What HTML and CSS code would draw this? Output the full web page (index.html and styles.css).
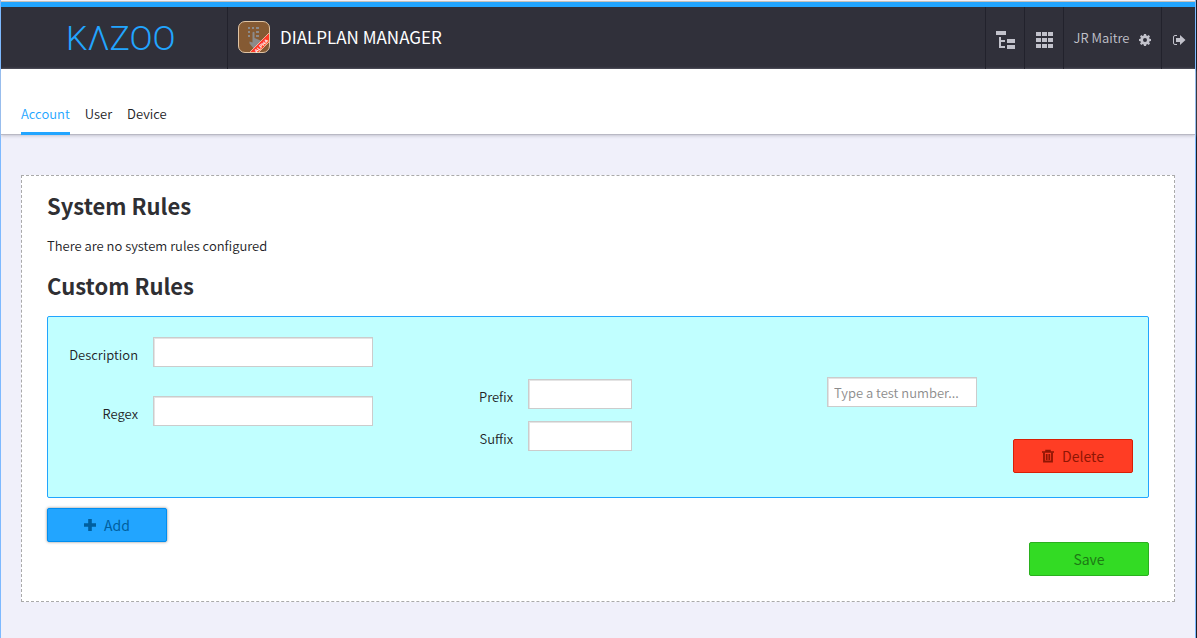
FILE: index.html
```html
<!DOCTYPE html>
<html lang="en">
<head>
<meta charset="utf-8">
<title>Dialplan Manager</title>
<link rel="stylesheet" href="styles.css">
</head>
<body>
<div class="app">
  <header class="topbar">
    <div class="brand" role="img" aria-label="Kazoo">KΛZOO</div>
    <div class="current-app">
      <svg class="app-icon" viewBox="0 0 32 32" aria-hidden="true">
        <defs><clipPath id="tile"><rect x="1" y="1" width="30" height="30" rx="6"/></clipPath></defs>
        <rect x="0.5" y="0.5" width="31" height="31" rx="6.5" fill="#855a33" stroke="#e0c4a4"/>
        <g fill="#8c8a8a">
          <path d="M10 6h2v2h-2zM14 6h2v2h-2zM18 6h3v2h-3zM10 10h2v2h-2zM18 10h3v2h-3zM10 14h2v2h-2zM18 14h3v2h-3z"/>
          <path d="M14.500 11.500q1-1.500 2 0V17l6 2.500 1 4-3 5h-4l-5-6v-2l3 1z"/>
        </g>
        <g clip-path="url(#tile)">
          <path d="M10 33L33 10V19L19 33z" fill="#ff3b26"/>
          <path d="M11 32L32 11M19 33L33 19" stroke="#f3c9b8" stroke-width="0.8"/>
        </g>
        <text class="ribbon" x="23" y="26" transform="rotate(-45 24 24)" text-anchor="middle">ALPHA</text>
      </svg>
      <span class="app-title">DIALPLAN MANAGER</span>
    </div>
    <button class="tool" type="button" aria-label="Account tree">
      <svg width="20" height="20" viewBox="0 0 20 20" fill="currentColor" aria-hidden="true">
        <path d="M1 1h10v4H1zM12 9h8v4h-8zM12 15h8v4h-8zM4 7h2v3h4v2H6v4h4v2H4z"/>
      </svg>
    </button>
    <button class="tool" type="button" aria-label="Applications">
      <svg width="18" height="18" viewBox="0 0 18 18" fill="currentColor" aria-hidden="true">
        <path d="M1 1h5v4H1zM7 1h5v4H7zM13 1h5v4h-5zM1 7h5v4H1zM7 7h5v4H7zM13 7h5v4h-5zM1 13h5v4H1zM7 13h5v4H7zM13 13h5v4h-5z"/>
      </svg>
    </button>
    <button class="tool user" type="button"><span class="user-name">JR Maitre</span>
      <svg width="12" height="12" viewBox="0 0 12 12" fill="currentColor" aria-hidden="true">
        <path fill-rule="evenodd" d="M5 0h2l.4 1.600.9.400L9.700 1.100l1.300 1.300-.9 1.400.4.900L12 5v2l-1.500.3-.4.900.9 1.400-1.300 1.300-1.400-.9-.9.400L7 12H5l-.4-1.600-.9-.4-1.400.9L1 9.600l.9-1.400-.4-.9L0 7V5l1.500-.3.4-.9L1 2.400l1.300-1.300 1.400.9.9-.4zM6 4a2 2 0 1 0 0 4 2 2 0 0 0 0-4z"/>
      </svg>
    </button>
    <button class="tool logout" type="button" aria-label="Log out">
      <svg width="14" height="12" viewBox="0 0 14 12" aria-hidden="true">
        <path d="M5 1.500H3Q1.500 1.500 1.500 3v6q0 1.500 1.500 1.500h2" fill="none" stroke="currentColor"/>
        <path d="M4 4h4V1l5.500 5L8 11V8H4z" fill="currentColor"/>
      </svg>
    </button>
  </header>

  <nav class="tabs">
    <a class="tab active" href="#account">Account</a>
    <a class="tab" href="#user">User</a>
    <a class="tab" href="#device">Device</a>
  </nav>

  <main class="panel">
    <h2>System Rules</h2>
    <p>There are no system rules configured</p>
    <h2>Custom Rules</h2>
    <form>
      <section class="rule">
        <div class="match">
          <div class="field"><label for="description">Description</label><input id="description" type="text"></div>
          <div class="field"><label for="regex">Regex</label><input id="regex" type="text"></div>
        </div>
        <div class="affix">
          <div class="field"><label for="prefix">Prefix</label><input id="prefix" type="text"></div>
          <div class="field"><label for="suffix">Suffix</label><input id="suffix" type="text"></div>
        </div>
        <div class="trial">
          <input class="test" type="text" aria-label="Test number" placeholder="Type a test number...">
          <button class="btn delete" type="button">
            <svg width="12" height="14" viewBox="0 0 12 14" aria-hidden="true">
              <path d="M0 3h12M4 3V1.500h4V3" fill="none" stroke="currentColor" stroke-width="1.500"/>
              <path d="M2 3.500V12.500h8V3.500M4.700 5v6M7.300 5v6" fill="none" stroke="currentColor" stroke-width="1.800"/>
            </svg>Delete</button>
        </div>
      </section>
      <div class="actions">
        <button class="btn add" type="button">
          <svg width="12" height="12" viewBox="0 0 12 12" aria-hidden="true">
            <path d="M6 0v12M0 6h12" stroke="currentColor" stroke-width="3.600"/>
          </svg>Add</button>
        <button class="btn save" type="submit">Save</button>
      </div>
    </form>
  </main>
</div>
</body>
</html>
```

FILE: styles.css
```css
* { box-sizing: border-box; }

body {
  margin: 0;
  background: #1a1e26;
  color: #222226;
  font: 350 13px/20px "Noto Sans CJK SC", "Noto Sans", sans-serif;
}

button, input { font: inherit; }

.app {
  min-height: 100vh;
  margin-right: 1px;
  padding-top: 1px;
  background: #f0f0fa;
  border: 1px solid #7db9ff;
  border-width: 0 1px;
}

.topbar {
  display: flex;
  height: 68px;
  background: #30303a;
  border-top: 1px solid #c4c0ba;
  box-shadow: inset 0 5px #22a5ff;
  padding-top: 5px;
}

.brand {
  width: 227px;
  padding-left: 65px;
  border-right: 1px solid #22222c;
  color: #22a5ff;
  font: 300 34px/62px Roboto, sans-serif;
}

.current-app {
  flex: 1;
  display: flex;
  align-items: center;
  gap: 10px;
  padding: 0 0 2px 10px;
  color: #fff;
  font-size: 17px;
  font-weight: 400;
}

.app-icon { width: 32px; height: 32px; }

.ribbon {
  fill: #fff;
  font: bold 5px "Liberation Sans", sans-serif;
}

.tool {
  display: flex;
  align-items: center;
  justify-content: center;
  gap: 10px;
  width: 39px;
  padding: 4px 0 0;
  background: none;
  border: 0;
  border-left: 1px solid #22222c;
  color: #c2c2cb;
}

.user { width: 98px; }
.user-name { padding-bottom: 4px; }
.logout { width: 34px; }

.tabs {
  display: flex;
  gap: 15px;
  padding: 35px 20px 0;
  background: #fff;
  border-bottom: 1px solid #b9b9c4;
  box-shadow: 0 1px 3px #c4c4d0;
}

.tab {
  height: 31px;
  margin-bottom: -1px;
  color: inherit;
  text-decoration: none;
}

.tab.active {
  color: #22a5ff;
  border-bottom: 3px solid #22a5ff;
}

.panel {
  margin: 40px 20px 36px;
  padding: 14px 25px 25px;
  background: #fff;
  border: 1px dashed #aaa;
}

h2 {
  margin: 0 0 16px;
  color: #2f2f33;
  font-size: 22px;
  line-height: 30px;
}

p { margin: 0 0 14px; }

.rule {
  display: grid;
  grid-template-columns: 375fr 404fr 321fr;
  margin-bottom: 10px;
  padding: 20px 0 24px;
  background: #c1ffff;
  border: 1px solid #22a5ff;
  border-radius: 2px;
}

.match, .affix { display: grid; align-content: start; }
.match { gap: 29px; }
.affix { gap: 12px; padding-top: 42px; }

.field { display: flex; gap: 15px; }

label {
  width: 90px;
  padding-top: 8px;
  text-align: right;
}

input {
  height: 30px;
  padding: 4px 6px;
  background: #fff;
  border: 1px solid #ccc;
  box-shadow: inset 1px 1px #e4e4e4;
  color: inherit;
}

input::placeholder { color: #8c8c8c; opacity: 1; }

.match input { width: 220px; }
.affix input { width: 104px; }
.test { width: 150px; }

.trial {
  display: flex;
  flex-direction: column;
  gap: 32px;
  padding: 40px 15px 0 0;
}

.trial .btn { align-self: flex-end; }

.btn {
  display: inline-flex;
  align-items: center;
  justify-content: center;
  gap: 8px;
  width: 120px;
  height: 34px;
  padding: 0;
  border: 1px solid;
  border-radius: 2px;
  font-size: 14px;
  font-weight: 400;
}

.delete { background: #ff3d24; border-color: #d81f06; color: #8f1604; }
.add { background: #22a5ff; border-color: #008ef0; color: #005f9f; box-shadow: 0 0 3px #888; }
.save { background: #33db24; border-color: #2ab01e; color: #1c7a14; }

.actions {
  display: flex;
  justify-content: space-between;
}

.save { margin-top: 34px; }
```
